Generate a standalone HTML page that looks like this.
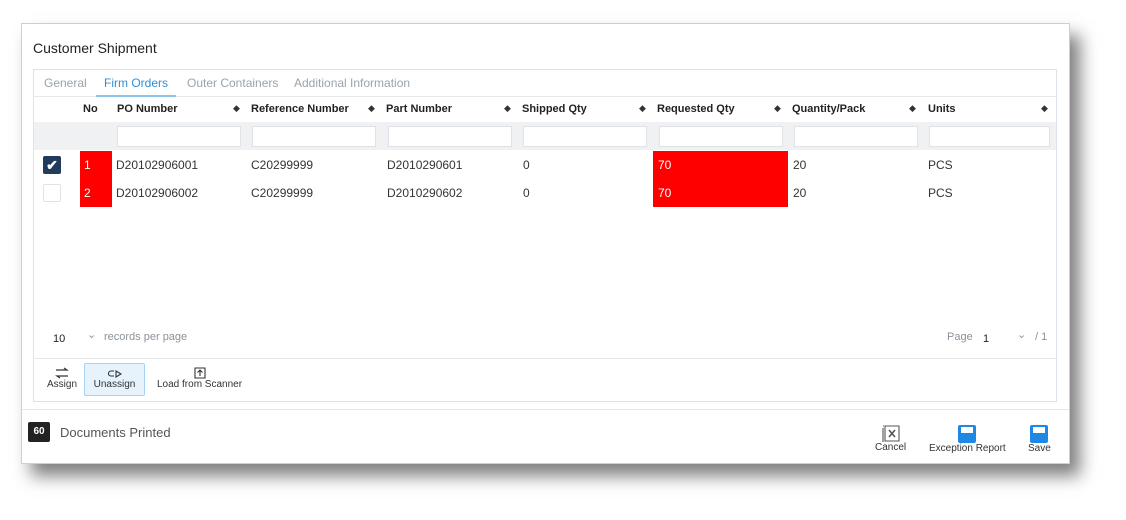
<!DOCTYPE html>
<html><head><style>
*{box-sizing:border-box;margin:0;padding:0}
body{width:1126px;height:520px;background:#fff;font-family:"Liberation Sans",sans-serif;position:relative;overflow:hidden;font-size:12px;color:#333}
.dlg{position:absolute;left:21px;top:23px;width:1049px;height:441px;background:#fff;border:1px solid #cfcfcf;box-shadow:10px 12px 16px rgba(0,0,0,.5)}
.title{position:absolute;left:11px;top:16px;font-size:14px;color:#222}
.panel{position:absolute;left:11px;top:45px;width:1024px;height:333px;border:1px solid #dde3ea}
.tabs{position:absolute;left:0;top:0;height:27px;width:100%;border-bottom:1px solid #e5e8ec}
.tab{position:absolute;top:6px;font-size:12px;color:#9aa3ab}
.tab.act{color:#2f8fd8;border-bottom:2px solid #8cc4ee;padding:0 8px 5px}
.hdr{position:absolute;top:26px;height:26px;left:0;width:100%}
.h{position:absolute;top:7px;font-weight:bold;font-size:11px;color:#222}
.so{position:absolute;top:7px;font-size:9px;color:#333}
.filt{position:absolute;top:52px;left:0;width:100%;height:28px;background:#f0f1f3}
.inp{position:absolute;top:4px;height:21px;background:#fff;border:1px solid #dfe2e6}
.row{position:absolute;left:0;width:100%;height:28px}
.c{position:absolute;top:7px;font-size:12px;color:#333}
.red{position:absolute;top:0;height:28px;background:#ff0000}
.pag{position:absolute;top:261px;font-size:11px;color:#8a929a}
.tb{position:absolute;top:288px;left:0;width:100%;height:44px;border-top:1px solid #e5e8ec}
.btn{position:absolute;font-size:10px;color:#333;text-align:center;white-space:nowrap}
.btn svg{display:block;margin:0 auto}
.foot{position:absolute;left:0;top:385px;width:100%;border-top:1px solid #e5e8ec}
</style></head><body>
<div class="dlg">
<div class="title">Customer Shipment</div>
<div class="panel">
 <div class="tabs">
  <span class="tab" style="left:10px">General</span>
  <span class="tab act" style="left:62px">Firm Orders</span>
  <span class="tab" style="left:153px">Outer Containers</span>
  <span class="tab" style="left:260px">Additional Information</span>
 </div>
 <div class="hdr">
  <span class="h" style="left:49px">No</span>
  <span class="h" style="left:83px">PO Number</span><span class="so" style="left:199px">◆</span>
  <span class="h" style="left:217px">Reference Number</span><span class="so" style="left:334px">◆</span>
  <span class="h" style="left:352px">Part Number</span><span class="so" style="left:470px">◆</span>
  <span class="h" style="left:488px">Shipped Qty</span><span class="so" style="left:605px">◆</span>
  <span class="h" style="left:623px">Requested Qty</span><span class="so" style="left:740px">◆</span>
  <span class="h" style="left:758px">Quantity/Pack</span><span class="so" style="left:875px">◆</span>
  <span class="h" style="left:894px">Units</span><span class="so" style="left:1007px">◆</span>
 </div>
 <div class="filt">
  <div class="inp" style="left:83px;width:124px"></div>
  <div class="inp" style="left:218px;width:124px"></div>
  <div class="inp" style="left:354px;width:124px"></div>
  <div class="inp" style="left:489px;width:124px"></div>
  <div class="inp" style="left:625px;width:124px"></div>
  <div class="inp" style="left:760px;width:124px"></div>
  <div class="inp" style="left:895px;width:121px"></div>
 </div>
 <div class="row" style="top:81px">
  <div style="position:absolute;left:9px;top:5px;width:18px;height:18px;background:#213b5c;border-radius:2px;color:#fff;font-size:14px;text-align:center;line-height:18px;font-weight:bold">✔</div>
  <div class="red" style="left:46px;width:32px"></div><span class="c" style="left:50px;color:#fff">1</span>
  <span class="c" style="left:82px">D20102906001</span>
  <span class="c" style="left:217px">C20299999</span>
  <span class="c" style="left:353px">D2010290601</span>
  <span class="c" style="left:489px">0</span>
  <div class="red" style="left:619px;width:135px"></div><span class="c" style="left:624px;color:#fff">70</span>
  <span class="c" style="left:759px">20</span>
  <span class="c" style="left:894px">PCS</span>
 </div>
 <div class="row" style="top:109px">
  <div style="position:absolute;left:9px;top:5px;width:18px;height:18px;border:1px solid #e0e3e6;border-radius:2px"></div>
  <div class="red" style="left:46px;width:32px"></div><span class="c" style="left:50px;color:#fff">2</span>
  <span class="c" style="left:82px">D20102906002</span>
  <span class="c" style="left:217px">C20299999</span>
  <span class="c" style="left:353px">D2010290602</span>
  <span class="c" style="left:489px">0</span>
  <div class="red" style="left:619px;width:135px"></div><span class="c" style="left:624px;color:#fff">70</span>
  <span class="c" style="left:759px">20</span>
  <span class="c" style="left:894px">PCS</span>
 </div>
 <span class="pag" style="left:19px;color:#222;top:263px">10</span>
 <span class="pag" style="left:53px;top:258px">⌄</span>
 <span class="pag" style="left:70px">records per page</span>
 <span class="pag" style="left:913px">Page</span>
 <span class="pag" style="left:949px;color:#222;top:263px">1</span>
 <span class="pag" style="left:983px;top:258px">⌄</span>
 <span class="pag" style="left:1001px">/ 1</span>
 <div class="tb">
  <div class="btn" style="left:13px;top:8px"><svg width="14" height="12" viewBox="0 0 14 12" fill="none" stroke="#333" stroke-width="1.2"><path d="M1 3h11l-3-2M13 9H2l3 2"/></svg>Assign</div>
  <div class="btn" style="left:50px;top:4px;width:61px;height:33px;background:#e6f2fc;border:1px solid #a9d1f2;border-radius:2px;padding-top:5px"><svg width="14" height="10" viewBox="0 0 14 10" fill="none" stroke="#333" stroke-width="1.1"><path d="M6 2H3a2.5 2.5 0 0 0 0 5h3M8 2l5 3-5 3z"/></svg>Unassign</div>
  <div class="btn" style="left:123px;top:8px"><svg width="12" height="12" viewBox="0 0 12 12" fill="none" stroke="#333" stroke-width="1.1"><path d="M1 1h10v10H1zM6 9V3M3.5 5.5 6 3l2.5 2.5"/></svg>Load from Scanner</div>
 </div>
</div>
<div class="foot"></div>
<div style="position:absolute;left:6px;top:398px;width:22px;height:20px;background:#222;color:#fff;font-size:10px;font-weight:bold;text-align:center;line-height:20px;border-radius:2px">60</div>
<span style="position:absolute;left:38px;top:401px;font-size:13px;color:#555">Documents Printed</span>
<div class="btn" style="left:853px;top:401px"><svg width="18" height="17" viewBox="0 0 18 17" fill="none" stroke="#555" stroke-width="1.1"><path d="M3 1h14v15H3zM1 3v14M1 1h1"/><path d="M7 5l6 7M13 5l-6 7" stroke-width="1.6"/></svg>Cancel</div>
<div class="btn" style="left:907px;top:401px"><svg width="18" height="18" viewBox="0 0 18 18"><rect x="0" y="0" width="18" height="18" rx="2" fill="#1e88e5"/><rect x="3" y="2" width="12" height="6" fill="#fff"/></svg>Exception Report</div>
<div class="btn" style="left:1006px;top:401px"><svg width="18" height="18" viewBox="0 0 18 18"><rect x="0" y="0" width="18" height="18" rx="2" fill="#1e88e5"/><rect x="3" y="2" width="12" height="6" fill="#fff"/></svg>Save</div>
</div>
</body></html>
